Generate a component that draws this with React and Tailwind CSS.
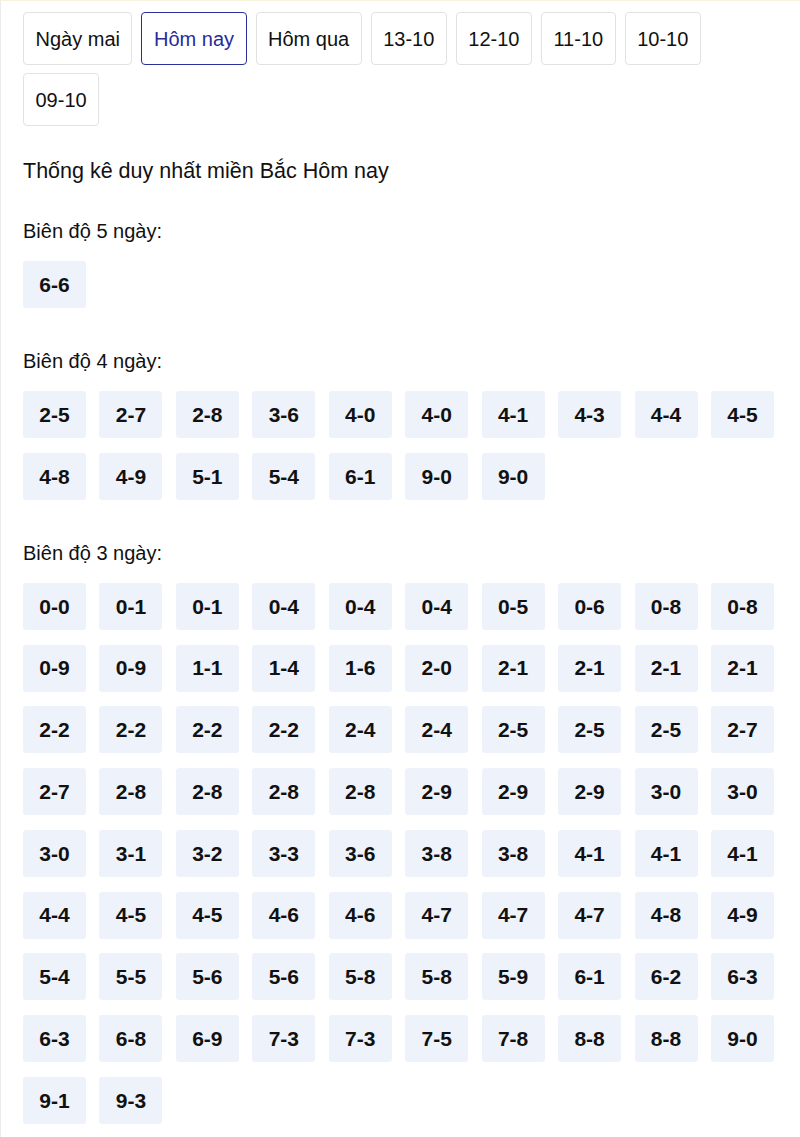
const tabs = ['Ngày mai', 'Hôm nay', 'Hôm qua', '13-10', '12-10', '11-10', '10-10', '09-10']

const groups = [
  { label: 'Biên độ 5 ngày:', items: ['6-6'] },
  {
    label: 'Biên độ 4 ngày:',
    items: '2-5 2-7 2-8 3-6 4-0 4-0 4-1 4-3 4-4 4-5 4-8 4-9 5-1 5-4 6-1 9-0 9-0'.split(' '),
  },
  {
    label: 'Biên độ 3 ngày:',
    items: (
      '0-0 0-1 0-1 0-4 0-4 0-4 0-5 0-6 0-8 0-8 ' +
      '0-9 0-9 1-1 1-4 1-6 2-0 2-1 2-1 2-1 2-1 ' +
      '2-2 2-2 2-2 2-2 2-4 2-4 2-5 2-5 2-5 2-7 ' +
      '2-7 2-8 2-8 2-8 2-8 2-9 2-9 2-9 3-0 3-0 ' +
      '3-0 3-1 3-2 3-3 3-6 3-8 3-8 4-1 4-1 4-1 ' +
      '4-4 4-5 4-5 4-6 4-6 4-7 4-7 4-7 4-8 4-9 ' +
      '5-4 5-5 5-6 5-6 5-8 5-8 5-9 6-1 6-2 6-3 ' +
      '6-3 6-8 6-9 7-3 7-3 7-5 7-8 8-8 8-8 9-0 ' +
      '9-1 9-3'
    ).split(' '),
  },
]

export default function App() {
  const active = 'Hôm nay'

  return (
    <div className="min-h-[1137px] bg-white border-t border-l border-t-[#f7f3dc] border-l-[#ececec] pl-[22px] pr-[26px] pt-[11px] pb-8 text-[#111] font-['Liberation_Sans',Arial,sans-serif]">
      {/* Day tabs */}
      <div className="flex flex-wrap gap-x-[9px] gap-y-2">
        {tabs.map((t) => (
          <button
            key={t}
            className={
              t === active
                ? 'h-[53px] px-[11.5px] rounded-[4px] border border-[#2b2f9a] text-[#262c9c] text-[20px] bg-white'
                : 'h-[53px] px-[11.5px] rounded-[4px] border border-[#e2e2e2] text-[#111] text-[20px] bg-white'
            }
          >
            {t}
          </button>
        ))}
      </div>

      <h2 className="mt-[30px] text-[21.5px] leading-[30px] font-normal">
        Thống kê duy nhất miền Bắc Hôm nay
      </h2>

      {groups.map((g, gi) => (
        <div key={g.label} className={gi === 0 ? 'mt-[30px]' : 'mt-[38px]'}>
          <div className="text-[20px] leading-[30px]">{g.label}</div>
          <div className="mt-[15px] grid grid-cols-[repeat(10,63px)] justify-between gap-y-[14.75px]">
            {g.items.map((n, i) => (
              <div
                key={i}
                className="h-[47px] w-[63px] rounded-[3px] bg-[#eef2fa] flex items-center justify-center font-bold text-[21px]"
              >
                {n}
              </div>
            ))}
          </div>
        </div>
      ))}
    </div>
  )
}
